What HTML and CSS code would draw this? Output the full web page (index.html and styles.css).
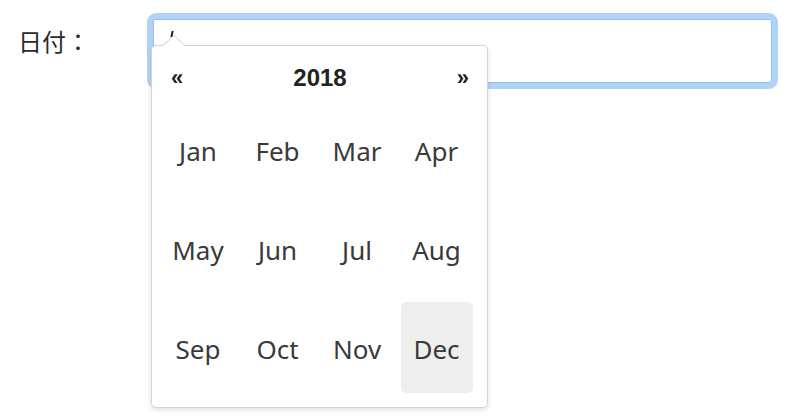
FILE: index.html
```html
<!DOCTYPE html>
<html lang="ja">
<head>
<meta charset="utf-8">
<link rel="stylesheet" href="styles.css">
</head>
<body>
<div class="row">
  <label class="label">日付：</label>
  <div class="field">
    <div class="input"><span class="cursor"></span></div>
    <div class="picker">
      <div class="header">
        <span class="nav">«</span>
        <span class="year">2018</span>
        <span class="nav">»</span>
      </div>
      <div class="months">
        <span class="month">Jan</span>
        <span class="month">Feb</span>
        <span class="month">Mar</span>
        <span class="month">Apr</span>
        <span class="month">May</span>
        <span class="month">Jun</span>
        <span class="month">Jul</span>
        <span class="month">Aug</span>
        <span class="month">Sep</span>
        <span class="month">Oct</span>
        <span class="month">Nov</span>
        <span class="month active">Dec</span>
      </div>
    </div>
  </div>
</div>
</body>
</html>
```

FILE: styles.css
```css
html, body {
  margin: 0;
  background: #fff;
}
body {
  min-height: 420px;
  font-family: "Noto Sans", "Noto Sans CJK JP", sans-serif;
  color: #333;
}
.row {
  display: flex;
  align-items: flex-start;
  padding: 13px 0 0 18px;
}
.label {
  width: 129px;
  flex: none;
  font-family: "Noto Sans CJK JP", sans-serif;
  font-size: 24px;
  line-height: 24px;
  padding-top: 16px;
  color: #2a2a2a;
}
.field {
  position: relative;
  width: 631px;
  height: 400px;
}
.input {
  box-sizing: border-box;
  height: 76px;
  border: 6px solid #b1d3f6;
  border-radius: 9px;
  background: #fff;
  box-shadow: inset 0 0 0 1px #8fc0f0;
}
.cursor {
  position: absolute;
  left: 24px;
  top: 18px;
  width: 2px;
  height: 6px;
  background: #222;
  transform: skewX(-12deg);
}
.picker {
  position: absolute;
  left: 4px;
  top: 32px;
  box-sizing: border-box;
  width: 337px;
  height: 363px;
  background: #fff;
  border: 1px solid #d4d4d4;
  border-radius: 5px;
  box-shadow: 0 2px 5px rgba(0,0,0,.12);
  padding: 10px 13px 13px 10px;
}
.picker::before,
.picker::after {
  content: "";
  position: absolute;
  border-left: 12px solid transparent;
  border-right: 12px solid transparent;
}
.picker::before {
  left: 10px;
  top: -11px;
  border-bottom: 11px solid #d0d0d0;
}
.picker::after {
  left: 10px;
  top: -10px;
  border-bottom: 11px solid #fff;
}
.header {
  display: flex;
  align-items: center;
  justify-content: space-between;
  height: 44px;
  margin: 0 -4px 4px 0;
  font-weight: 700;
  color: #222;
}
.nav {
  width: 30px;
  text-align: center;
  font-size: 22px;
  font-family: "Liberation Sans", sans-serif;
}
.year {
  font-size: 24px;
  font-family: "Liberation Sans", sans-serif;
}
.months {
  display: grid;
  grid-template-columns: repeat(4, 72px);
  grid-auto-rows: 91px;
  column-gap: 7.5px;
  row-gap: 8px;
}
.month {
  display: flex;
  align-items: center;
  justify-content: center;
  padding-top: 2px;
  border-radius: 5px;
  font-size: 26px;
  color: #3a3a3a;
}
.month.active {
  background: #eeeeee;
}
```
